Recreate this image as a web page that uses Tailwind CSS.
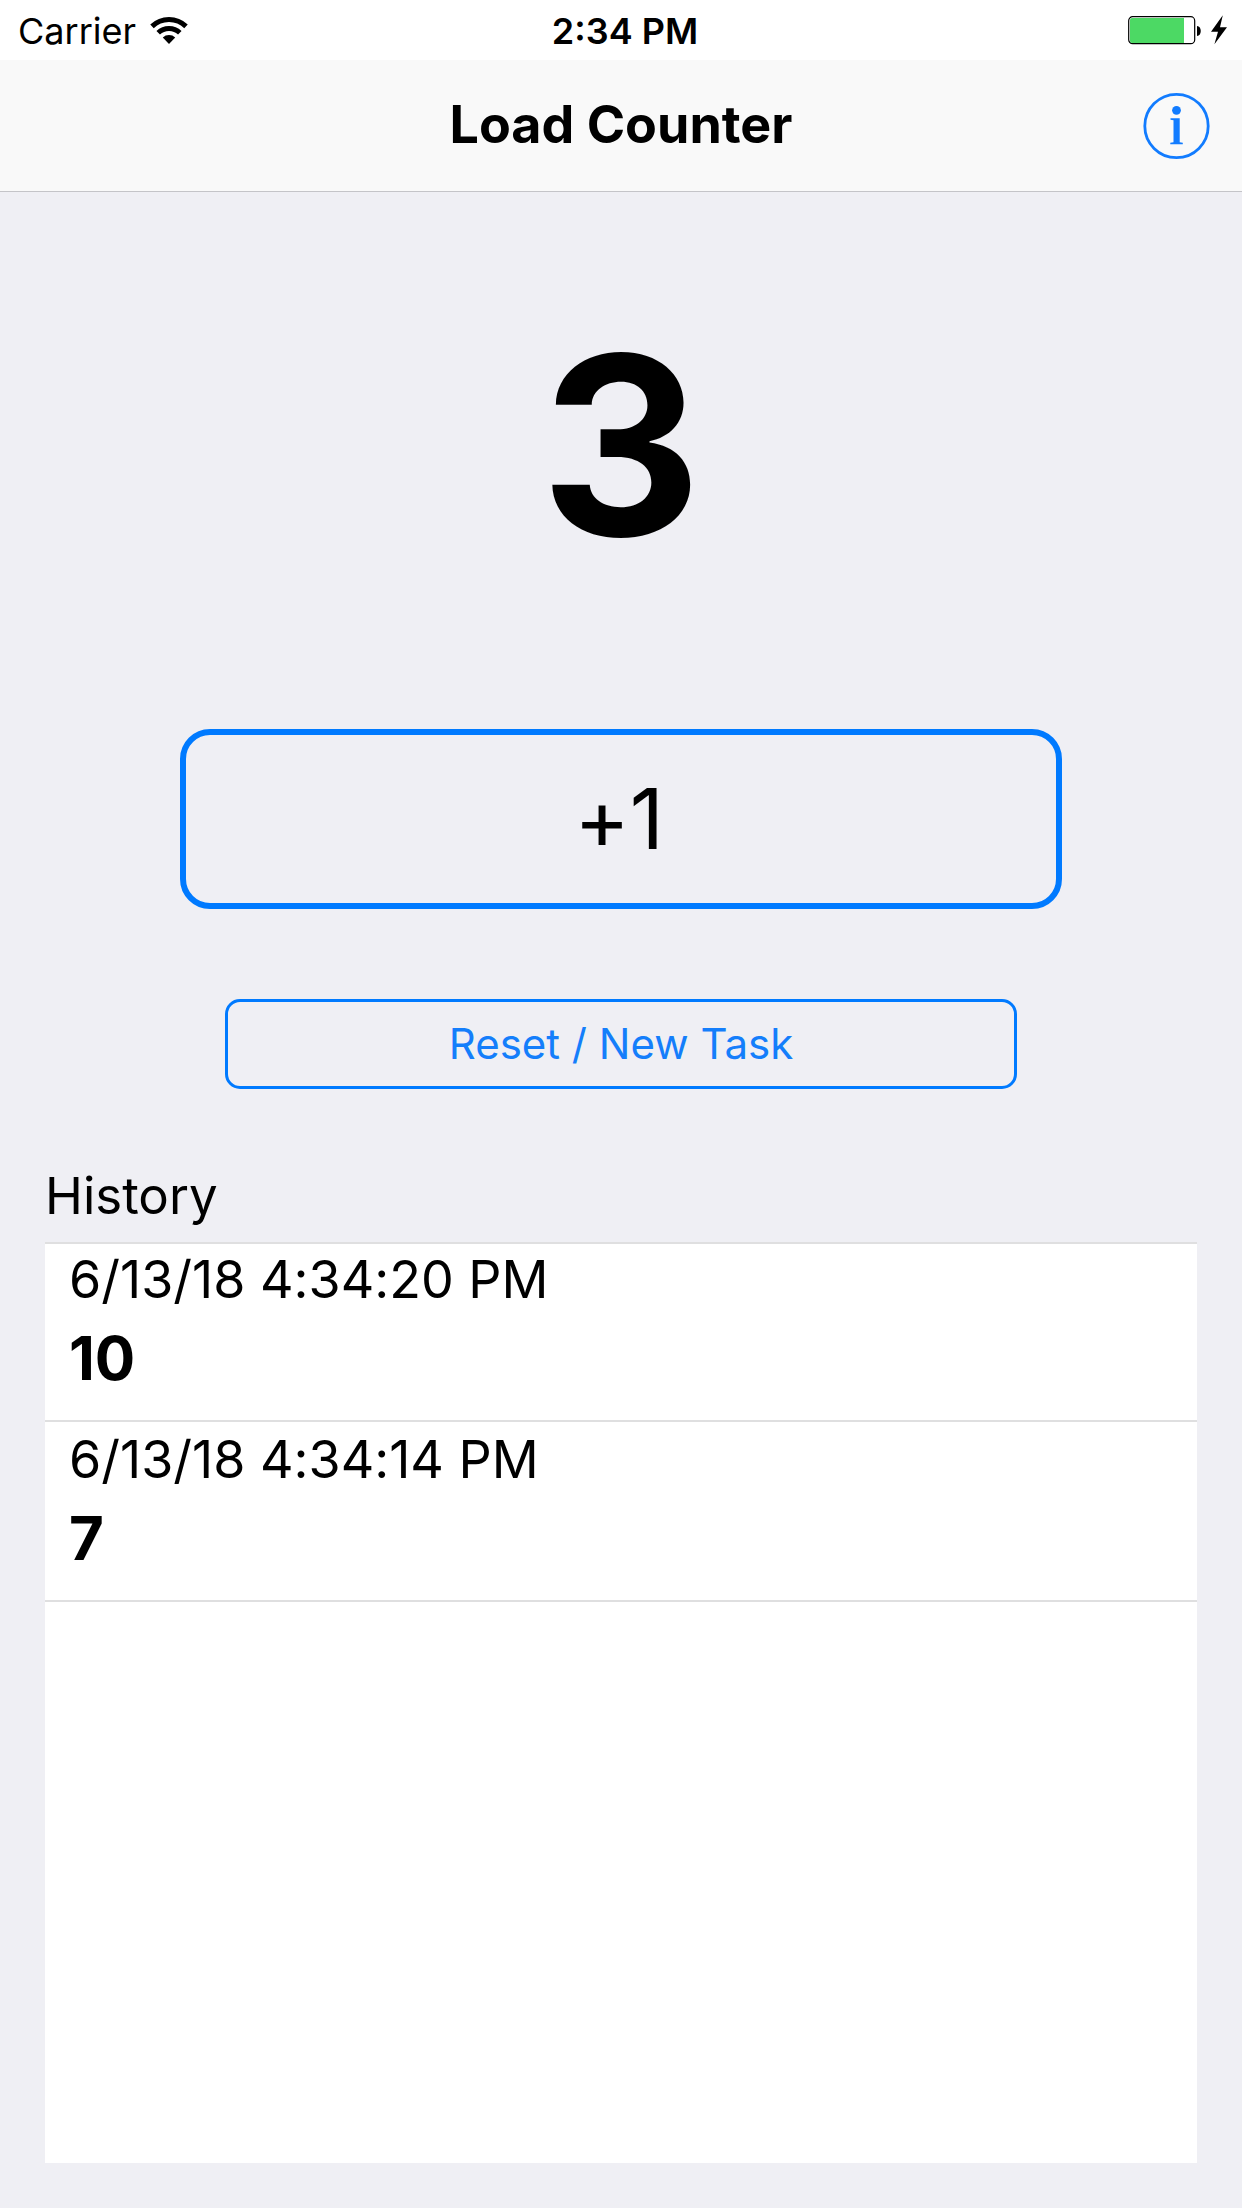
<!DOCTYPE html>
<html lang="en">
<head>
<meta charset="utf-8">
<meta name="viewport" content="width=device-width, initial-scale=1">
<title>Load Counter</title>
<script src="https://cdn.jsdelivr.net/npm/@tailwindcss/browser@4"></script>
</head>
<body class="flex min-h-screen flex-col bg-[#efeff4] font-['Inter',sans-serif] text-black">
  <!-- Status bar -->
  <div class="grid h-[60px] grid-cols-3 items-center bg-white px-4 pt-0.5 text-[36px] leading-[58px]">
    <div class="flex items-center gap-3.5 pl-0.5">
      <span>Carrier</span>
      <svg class="h-[28px] w-[38px] overflow-visible" viewBox="0 1 38 28" fill="none" stroke="#000" stroke-width="5" role="img" aria-label="Wi-Fi">
        <path d="M2 10.4A24.5 24.5 0 0 1 36 10.4"/>
        <path d="M8.2 16.8A15.5 15.5 0 0 1 29.8 16.8"/>
        <path d="M19 28L12.8 21.4A9 9 0 0 1 25.2 21.4Z" fill="#000" stroke="none"/>
      </svg>
    </div>
    <span class="pl-2 text-center font-semibold">2:34 PM</span>
    <svg class="h-[30px] w-[98px] justify-self-end overflow-visible" viewBox="0 1 98 30" role="img" aria-label="Battery charging">
      <rect x="0.7" y="1.7" width="66" height="27" rx="4" fill="#fff" stroke="#000" stroke-width="1.2"/>
      <path d="M4 3H56V28H4Q2 28 2 26V5Q2 3 4 3Z" fill="#4cd964"/>
      <path d="M69 11C74 11 74 21 69 21Z" fill="#000"/>
      <path d="M94.8 0.3L83 16.8H90L86.4 29.3L99 12.2H92Z" fill="#000"/>
    </svg>
  </div>

  <!-- Navigation bar -->
  <header class="grid h-[132px] grid-cols-[1fr_auto_1fr] items-center border-b border-[#c4c4c8] bg-[#f9f9f9] px-8">
    <h1 class="col-start-2 pb-0.5 text-[52px] font-bold leading-[60px]">Load Counter</h1>
    <button type="button" aria-label="Info" class="justify-self-end">
      <svg class="block size-[68px]" viewBox="0 0 68 68" fill="#127cff">
        <circle cx="34.5" cy="34" r="31.7" fill="none" stroke="#127cff" stroke-width="2.8"/>
        <circle cx="34.5" cy="18.3" r="4.4"/>
        <path d="M28.5 26.3H37.7V50.3L40.8 50.8V52.3H28.3V50.8L31.5 50.3V28.3L28.5 27.8Z"/>
      </svg>
    </button>
  </header>

  <main class="flex flex-1 flex-col px-[45px] pb-[45px]">
    <output class="mt-[128px] block text-center text-[250px] font-bold leading-none">3</output>
    <button type="button" class="mx-[135px] mt-[159px] h-[180px] rounded-[30px] border-6 border-[#007aff] pr-1 text-[84px] leading-none [font-feature-settings:'calt'_0] [font-kerning:none]">+1</button>
    <button type="button" class="mx-[180px] mt-[90px] h-[90px] rounded-[15px] border-3 border-[#007aff] text-[42px] leading-none text-[#147efb]">Reset / New Task</button>

    <h2 class="mt-[77px] text-[51px] leading-[60px]">History</h2>
    <ul class="mt-4 flex-1 bg-white shadow-[inset_0_2px_0_#dfdfe0] [font-feature-settings:'calt'_0] [font-kerning:none]">
      <li class="h-[180px] border-b-2 border-[#dfdfe0] px-6 pt-2">
        <p class="text-[52px] leading-[60px]">6/13/18 4:34:20 PM</p>
        <p class="mt-3 text-[60px] font-bold leading-[72px]">10</p>
      </li>
      <li class="h-[180px] border-b-2 border-[#dfdfe0] px-6 pt-2">
        <p class="text-[52px] leading-[60px]">6/13/18 4:34:14 PM</p>
        <p class="mt-3 text-[60px] font-bold leading-[72px]">7</p>
      </li>
    </ul>
  </main>
</body>
</html>
